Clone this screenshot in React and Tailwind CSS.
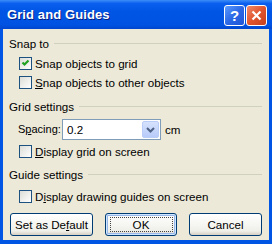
import React from "react";

const FONT = "font-['Liberation_Sans',Arial,sans-serif]";

function Check({ checked }) {
  return (
    <span className="w-[13px] h-[13px] border border-[#1C5180] bg-[linear-gradient(135deg,#DCDCD7,#FFFFFF)] flex items-center justify-center shrink-0">
      {checked && (
        <svg width="9" height="9" viewBox="0 0 9 9">
          <path d="M1.5 3.5 L3.5 5.5 L7.5 1.5" stroke="#21A121" strokeWidth="2.2" fill="none" />
        </svg>
      )}
    </span>
  );
}

function Option({ checked, className = "", children }) {
  return (
    <div className={`flex items-center h-[13px] pl-[16px] gap-[3px] ${className}`}>
      <Check checked={checked} />
      <span className="leading-[13px] whitespace-nowrap">{children}</span>
    </div>
  );
}

function Group({ title, className = "" }) {
  return (
    <div className={`flex items-center h-[13px] pl-[6px] pr-[7px] gap-[5px] ${className}`}>
      <span className="leading-[13px] whitespace-nowrap">{title}</span>
      <div className="flex-1 h-px bg-[#D0D0BF]" />
    </div>
  );
}

function Btn({ w, focused, children }) {
  return (
    <button
      className={`${w} h-[23px] rounded-[3px] border border-[#003C74] bg-[linear-gradient(180deg,#FFFFFF,#F0F0EA_80%,#D6D0C5)] flex items-center justify-center leading-none ${
        focused ? "shadow-[inset_0_0_0_1px_#CEE7FF,inset_0_0_0_2px_#98B8EA]" : ""
      }`}
    >
      {focused ? (
        <span className="w-[63px] h-[15px] border border-dotted border-[#444] flex items-center justify-center">
          {children}
        </span>
      ) : (
        children
      )}
    </button>
  );
}

export default function App() {
  return (
    <div className={`w-[272px] h-[244px] flex flex-col bg-[#0055E5] text-[11.6px] text-black ${FONT}`}>
      <div className="h-[29px] shrink-0 flex items-center pl-[7px] pr-[5px] bg-[linear-gradient(180deg,#3D8DF7_0%,#0A5FEF_12%,#0055E5_40%,#0053E2_85%,#0046CF_100%)]">
        <span className="flex-1 text-white font-bold text-[13px] [text-shadow:1px_1px_#0A1E80] tracking-[0.1px]">
          Grid and Guides
        </span>
        <div className="flex gap-[1px] mt-[1px]">
          <div className="w-[21px] h-[21px] rounded-[3px] border border-white bg-[linear-gradient(135deg,#5C9BFF,#2B68E6_50%,#1E55D6)] flex items-center justify-center text-white font-bold text-[15px] leading-none">
            ?
          </div>
          <div className="w-[21px] h-[21px] rounded-[3px] border border-white bg-[linear-gradient(135deg,#F08B6A,#E0552E_50%,#C7401C)] flex items-center justify-center">
            <svg width="11" height="11" viewBox="0 0 11 11">
              <path d="M1.5 1.5 L9.5 9.5 M9.5 1.5 L1.5 9.5" stroke="white" strokeWidth="2.2" />
            </svg>
          </div>
        </div>
      </div>

      <div className="flex-1 mx-[3px] mb-[4px] bg-[#ECE9D8] flex flex-col">
        <Group title="Snap to" className="mt-[8px]" />
        <Option checked className="mt-[7px]">
          Snap objects to <span className="underline">g</span>rid
        </Option>
        <Option className="mt-[6px]">
          <span className="underline">S</span>nap objects to other objects
        </Option>

        <Group title="Grid settings" className="mt-[11px]" />
        <div className="flex items-center h-[21px] mt-[6px] pl-[15px]">
          <span className="w-[44px] whitespace-nowrap text-[11px]">
            S<span className="underline">p</span>acing:
          </span>
          <div className="w-[99px] h-[21px] border border-[#7F9DB9] bg-white flex items-center">
            <span className="flex-1 pl-[4px]">0.2</span>
            <div className="w-[17px] h-[17px] mr-[1px] rounded-[2px] border border-[#B9CDF8] bg-[linear-gradient(180deg,#D6E2FD,#B7CBF9)] flex items-center justify-center">
              <svg width="9" height="6" viewBox="0 0 9 6">
                <path d="M1 1 L4.5 4.5 L8 1" stroke="#4D6185" strokeWidth="2" fill="none" />
              </svg>
            </div>
          </div>
          <span className="ml-[4px]">cm</span>
        </div>
        <Option className="mt-[5px]">
          <span className="underline">D</span>isplay grid on screen
        </Option>

        <Group title="Guide settings" className="mt-[10px]" />
        <Option className="mt-[9px]">
          D<span className="underline">i</span>splay drawing guides on screen
        </Option>

        <div className="flex justify-between mt-[10px] pl-[7px] pr-[7px]">
          <Btn w="w-[83px]">
            Set as De<span className="underline">f</span>ault
          </Btn>
          <Btn w="w-[72px]" focused>
            OK
          </Btn>
          <Btn w="w-[73px]">Cancel</Btn>
        </div>
      </div>
    </div>
  );
}
